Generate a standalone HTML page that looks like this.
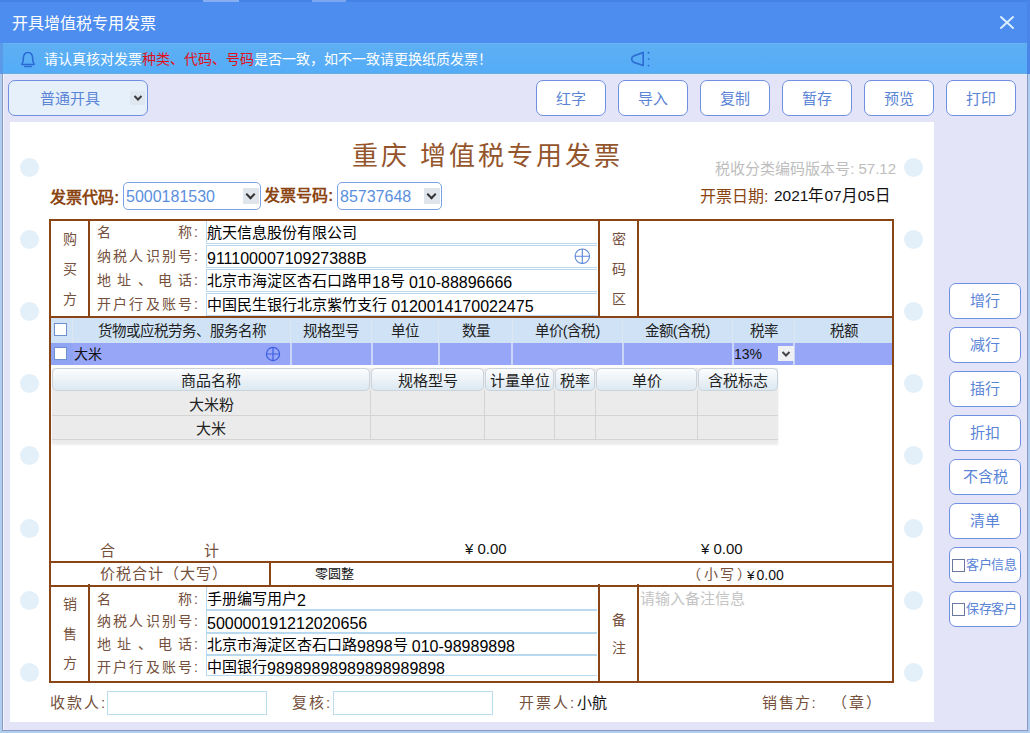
<!DOCTYPE html>
<html lang="zh-CN">
<head>
<meta charset="utf-8">
<style>
*{box-sizing:border-box;margin:0;padding:0}
html,body{width:1030px;height:733px;overflow:hidden;background:#b0cdee;font-family:"Liberation Sans",sans-serif}
.a{position:absolute}

#title{position:absolute;left:0;top:0;width:1030px;height:43px;background:#4e8df0}
#frm{position:absolute;left:2px;top:74px;width:1026px;height:657px;border:1px solid #8a9cc6;border-top:0;background:#e4e4f8}
#notice{position:absolute;left:3px;top:43px;width:1024px;height:31px;background:linear-gradient(#5eaff2,#54acf8);border-top:1px solid #66b4f6;border-bottom:1px solid #6aa8de}
.tb{position:absolute;top:80px;height:36px;width:70px;border:1px solid #6f8fe0;border-radius:7px;background:#fff;color:#5a84d6;font-size:15px;text-align:center;line-height:36px}
.rb{position:absolute;left:949px;width:72px;height:36px;border:1px solid #6f8fe0;border-radius:7px;background:#fff;color:#5a84d6;font-size:15px;text-align:center;line-height:34px}
#paper{position:absolute;left:10px;top:122px;width:924px;height:600px;background:#fff}
.dot{position:absolute;width:19px;height:19px;border-radius:50%;background:#e3f0fa}
.br{background:#8a4516}

.inp{position:absolute;border:1px solid #b8d9f0;border-right:0;background:#fff;font-size:15px;color:#000;line-height:21px;padding-left:0;white-space:nowrap;overflow:hidden}

.sel{border:1px solid #7ba2e6;border-radius:5px;background:#fff}
.sel span{position:absolute;left:2px;top:4px;font-size:16px;line-height:20px;color:#5a8fe0}
.sel i{position:absolute;top:5px;width:16px;height:16px;background:#e0e4eb}
.sel i:after{content:"";position:absolute;left:4px;top:3px;width:5px;height:5px;border-right:2px solid #333;border-bottom:2px solid #333;transform:rotate(45deg)}
.vt{font-size:14px;line-height:30px;color:#75503c;text-align:center}
.flab{position:absolute;left:97px;width:95px;display:flex;justify-content:space-between;font-size:14px;line-height:22px;color:#75503c}
.colon{position:absolute;left:194px;font-size:14px;line-height:22px;color:#75503c}
.cb{width:13px;height:13px;border:1px solid #6f8fcf;background:#fff}
.hdr{position:absolute;top:318px;height:25px;font-size:14.5px;line-height:26px;text-align:center;color:#222}
.gh{position:absolute;top:368px;height:23px;font-size:15px;line-height:23px;text-align:center;color:#222;border:1px solid #c9d3dc;border-radius:5px;background:linear-gradient(#fcfdfe,#dce8f1)}
.gt{font-size:15px;line-height:22px;text-align:center;color:#222}
.brl{font-size:15px;line-height:20px;color:#75503c;white-space:nowrap;letter-spacing:2px}
.sq{display:inline-block;width:13px;height:13px;border:1px solid #6a78a0;vertical-align:-3px;margin-right:1px}
.d{font-size:16px;vertical-align:-1.5px}
</style>
</head>
<body>
<div id="title"></div>
<div class="a" style="left:0;top:0;width:1030px;height:2px;background:#4683e6"></div><div class="a" style="left:1027px;top:0;width:3px;height:74px;background:#4a86e8"></div><div class="a" style="left:0;top:43px;width:3px;height:31px;background:#5a9ae8"></div>
<div class="a" style="left:12px;top:13px;color:#fff;font-size:16px;line-height:22px">开具增值税专用发票</div>
<svg class="a" style="left:998px;top:14px" width="18" height="17" viewBox="0 0 18 17"><path d="M3 3L15 14M15 3L3 14" stroke="#dcefff" stroke-width="1.9" stroke-linecap="round"/></svg>
<div id="notice"></div><div class="a" style="left:203px;top:0;width:36px;height:2px;background:#86aef0"></div><div class="a" style="left:312px;top:0;width:34px;height:2px;background:#7ca6ee"></div>
<div class="a" style="left:44px;top:49px;color:#fff;font-size:14px;line-height:20px;white-space:nowrap">请认真核对发票<span style="color:#e0101a">种类、代码、号码</span>是否一致，如不一致请更换纸质发票！</div>
<svg class="a" style="left:15px;top:45px" width="30" height="27" viewBox="0 0 30 27"><path d="M8.3 14C8.3 9.5 10.3 7.4 13 7.4S17.7 9.5 17.7 14C17.7 16.5 18.2 18 19.1 19Q19.5 19.6 18.7 19.6H7.3Q6.5 19.6 6.9 19C7.8 18 8.3 16.5 8.3 14Z" fill="none" stroke="#2a6ad2" stroke-width="1.5" stroke-linejoin="round"/><path d="M9.2 21.5H17" stroke="#2a6ad2" stroke-width="1.4"/></svg>
<svg class="a" style="left:629px;top:50px" width="24" height="18" viewBox="0 0 24 18"><path d="M14.2 2.4L4.6 6Q2.7 6.7 2.7 9.1Q2.7 11.5 4.6 12.2L14.2 15.5Z" fill="none" stroke="#2a6ad2" stroke-width="1.6" stroke-linejoin="round"/><circle cx="19.5" cy="2.7" r="0.95" fill="#2a6ad2"/><circle cx="19.7" cy="9.1" r="0.95" fill="#2a6ad2"/><circle cx="19.5" cy="15.6" r="0.95" fill="#2a6ad2"/></svg>
<div id="frm"></div><div class="a" style="left:3px;top:74px;width:1024px;height:1px;background:#d8eefb"></div><div class="a" style="left:3px;top:74px;width:1px;height:656px;background:#f2f2fc"></div>

<div class="tb" style="left:8px;width:140px;background:#e6f0fb;text-align:left;padding-left:31px">普通开具</div><div class="a" style="left:130px;top:91px;width:15px;height:14px;background:#dfe7f1"></div><svg class="a" style="left:133px;top:94px" width="10" height="8" viewBox="0 0 10 8"><path d="M1.5 2L5 5.5L8.5 2" fill="none" stroke="#3c3c3c" stroke-width="2"/></svg>
<div class="tb" style="left:536px">红字</div>
<div class="tb" style="left:618px">导入</div>
<div class="tb" style="left:700px">复制</div>
<div class="tb" style="left:782px">暂存</div>
<div class="tb" style="left:864px">预览</div>
<div class="tb" style="left:946px">打印</div>

<div id="paper"></div>

<!-- dots -->
<div class="dot" style="left:20px;top:158px"></div><div class="dot" style="left:904px;top:158px"></div><div class="dot" style="left:20px;top:230px"></div><div class="dot" style="left:904px;top:230px"></div><div class="dot" style="left:20px;top:302px"></div><div class="dot" style="left:904px;top:302px"></div><div class="dot" style="left:20px;top:374px"></div><div class="dot" style="left:904px;top:374px"></div><div class="dot" style="left:20px;top:446px"></div><div class="dot" style="left:904px;top:446px"></div><div class="dot" style="left:20px;top:519px"></div><div class="dot" style="left:904px;top:519px"></div><div class="dot" style="left:20px;top:591px"></div><div class="dot" style="left:904px;top:591px"></div><div class="dot" style="left:20px;top:663px"></div><div class="dot" style="left:904px;top:663px"></div>
<!-- invoice title -->
<div class="a" style="left:352px;top:138px;font-size:26px;line-height:36px;color:#94552c;letter-spacing:3px;white-space:nowrap">重庆 增值税专用发票</div>
<div class="a" style="left:714px;top:159px;width:182px;text-align:right;font-size:15px;line-height:20px;color:#bdbdbd;white-space:nowrap">税收分类编码版本号: 57.12</div>
<div class="a" style="left:700px;top:186px;font-size:16px;line-height:22px;white-space:nowrap;color:#8b4513">开票日期:</div><div class="a" style="left:774px;top:186px;font-size:15.5px;line-height:20px;white-space:nowrap;color:#111">2021年07月05日</div>

<div class="a" style="left:50px;top:187px;font-size:16px;line-height:22px;font-weight:bold;color:#8b4513;white-space:nowrap">发票代码:</div>
<div class="a sel" style="left:123px;top:182px;width:138px;height:28px"><span>5000181530</span><i style="left:119px"></i></div>
<div class="a" style="left:264px;top:185px;font-size:16px;line-height:22px;font-weight:bold;color:#8b4513;white-space:nowrap">发票号码:</div>
<div class="a sel" style="left:337px;top:182px;width:105px;height:28px"><span>85737648</span><i style="left:86px"></i></div>

<!-- table borders -->
<div class="a br" style="left:49px;top:219px;width:845px;height:2px"></div>
<div class="a br" style="left:49px;top:316px;width:845px;height:2px"></div>
<div class="a br" style="left:49px;top:561px;width:845px;height:2px"></div>
<div class="a br" style="left:49px;top:585px;width:845px;height:2px"></div>
<div class="a br" style="left:49px;top:681px;width:845px;height:2px"></div>
<div class="a br" style="left:49px;top:219px;width:2px;height:464px"></div>
<div class="a br" style="left:892px;top:219px;width:2px;height:464px"></div>
<div class="a br" style="left:88px;top:219px;width:2px;height:98px"></div>
<div class="a br" style="left:598px;top:219px;width:2px;height:98px"></div>
<div class="a br" style="left:637px;top:219px;width:2px;height:98px"></div>
<div class="a br" style="left:88px;top:584px;width:2px;height:98px"></div>
<div class="a br" style="left:598px;top:584px;width:2px;height:98px"></div>
<div class="a br" style="left:637px;top:584px;width:2px;height:98px"></div>
<div class="a br" style="left:269px;top:561px;width:2px;height:24px"></div>

<!-- buyer -->
<div class="a vt" style="left:51px;top:224px;width:37px">购<br>买<br>方</div>
<div class="a vt" style="left:600px;top:224px;width:37px">密<br>码<br>区</div>
<div class="a flab" style="top:221px"><span>名</span><span>称</span></div>
<div class="a flab" style="top:245px"><span>纳</span><span>税</span><span>人</span><span>识</span><span>别</span><span>号</span></div>
<div class="a flab" style="top:269px"><span>地</span><span>址</span><span>、</span><span>电</span><span>话</span></div>
<div class="a flab" style="top:293px"><span>开</span><span>户</span><span>行</span><span>及</span><span>账</span><span>号</span></div>
<div class="a colon" style="top:221px">:</div><div class="a colon" style="top:245px">:</div><div class="a colon" style="top:269px">:</div><div class="a colon" style="top:293px">:</div>
<div class="inp" style="left:206px;top:221px;width:391px;height:23px;border-top:0;padding-top:1px">航天信息股份有限公司</div>
<div class="inp" style="left:206px;top:245px;width:391px;height:23px"><span class="d">91110000710927388B</span></div>
<div class="inp" style="left:206px;top:269px;width:391px;height:23px">北京市海淀区杏石口路甲<span class="d">18</span>号 <span class="d">010-88896666</span></div>
<div class="inp" style="left:206px;top:293px;width:391px;height:23px">中国民生银行北京紫竹支行 <span class="d">0120014170022475</span></div>
<svg class="a" style="left:574px;top:248px" width="17" height="17" viewBox="0 0 17 17"><circle cx="8.3" cy="8.2" r="7.2" fill="none" stroke="#5a85d8" stroke-width="1.1"/><path d="M1.1 8.2H15.5M8.3 1V15.4" stroke="#5a85d8" stroke-width="1.1"/></svg>

<!-- items header -->
<div class="a" style="left:51px;top:318px;width:841px;height:25px;background:#cfe2f6"></div>
<div class="a" style="left:51px;top:343px;width:841px;height:22px;background:#98a6f8"></div>
<div class="a" style="left:51px;top:343px;width:22px;height:22px;background:#8fa5f4"></div>
<div class="a" style="left:72px;top:318px;width:1px;height:25px;background:#dce7f1"></div><div class="a" style="left:290px;top:318px;width:1px;height:25px;background:#dce7f1"></div><div class="a" style="left:371px;top:318px;width:1px;height:25px;background:#dce7f1"></div><div class="a" style="left:438px;top:318px;width:1px;height:25px;background:#dce7f1"></div><div class="a" style="left:512px;top:318px;width:1px;height:25px;background:#dce7f1"></div><div class="a" style="left:622px;top:318px;width:1px;height:25px;background:#dce7f1"></div><div class="a" style="left:732px;top:318px;width:1px;height:25px;background:#dce7f1"></div><div class="a" style="left:794px;top:318px;width:1px;height:25px;background:#dce7f1"></div><div class="a" style="left:290px;top:343px;width:2px;height:22px;background:#c9d6f7"></div><div class="a" style="left:371px;top:343px;width:2px;height:22px;background:#c9d6f7"></div><div class="a" style="left:438px;top:343px;width:2px;height:22px;background:#c9d6f7"></div><div class="a" style="left:511px;top:343px;width:2px;height:22px;background:#c9d6f7"></div><div class="a" style="left:622px;top:343px;width:2px;height:22px;background:#c9d6f7"></div><div class="a" style="left:732px;top:343px;width:2px;height:22px;background:#c9d6f7"></div><div class="a" style="left:793px;top:343px;width:2px;height:22px;background:#c9d6f7"></div>
<div class="a cb" style="left:54px;top:323px"></div>
<div class="a cb" style="left:54px;top:347px"></div>
<div class="hdr" style="left:73px;width:218px">货物或应税劳务、服务名称</div>
<div class="hdr" style="left:291px;width:80px">规格型号</div>
<div class="hdr" style="left:372px;width:66px">单位</div>
<div class="hdr" style="left:439px;width:73px">数量</div>
<div class="hdr" style="left:513px;width:109px">单价(含税)</div>
<div class="hdr" style="left:623px;width:109px">金额(含税)</div>
<div class="hdr" style="left:733px;width:61px">税率</div>
<div class="hdr" style="left:795px;width:97px">税额</div>
<div class="a" style="left:74px;top:343px;font-size:14px;line-height:22px;color:#111">大米</div>
<svg class="a" style="left:265px;top:346px" width="16" height="16" viewBox="0 0 16 16"><circle cx="8" cy="8" r="6.6" fill="none" stroke="#3a5fe0" stroke-width="1.2"/><path d="M1.4 8H14.6M8 1.4V14.6" stroke="#3a5fe0" stroke-width="1.2"/></svg>
<div class="a" style="left:734px;top:343px;font-size:14px;line-height:22px;color:#111">13%</div>
<div class="a" style="left:778px;top:346px;width:16px;height:15px;background:#eef0f4"></div>
<svg class="a" style="left:781px;top:350px" width="10" height="8" viewBox="0 0 10 8"><path d="M1.5 2L5 5.5L8.5 2" fill="none" stroke="#444" stroke-width="2"/></svg>

<!-- dropdown grid -->
<div class="a" style="left:52px;top:368px;width:726px;height:75px;background:#ebebeb;box-shadow:0 2px 2px rgba(0,0,0,0.08)"></div>
<div class="gh" style="left:52px;width:318px">商品名称</div>
<div class="gh" style="left:371px;width:113px">规格型号</div>
<div class="gh" style="left:485px;width:69px">计量单位</div>
<div class="gh" style="left:555px;width:40px">税率</div>
<div class="gh" style="left:596px;width:101px">单价</div>
<div class="gh" style="left:698px;width:80px">含税标志</div>
<div class="a" style="left:52px;top:415px;width:726px;height:1px;background:#d4d4d4"></div>
<div class="a" style="left:52px;top:439px;width:726px;height:1px;background:#d4d4d4"></div>
<div class="a" style="left:370px;top:390px;width:1px;height:50px;background:#d4d4d4"></div>
<div class="a" style="left:484px;top:390px;width:1px;height:50px;background:#d4d4d4"></div>
<div class="a" style="left:554px;top:390px;width:1px;height:50px;background:#d4d4d4"></div>
<div class="a" style="left:595px;top:390px;width:1px;height:50px;background:#d4d4d4"></div>
<div class="a" style="left:697px;top:390px;width:1px;height:50px;background:#d4d4d4"></div>
<div class="a gt" style="left:52px;top:394px;width:318px">大米粉</div>
<div class="a gt" style="left:52px;top:418px;width:318px">大米</div>

<!-- totals -->
<div class="a brl" style="left:100px;top:541px">合</div>
<div class="a brl" style="left:204px;top:541px">计</div>
<div class="a" style="left:465px;top:539px;font-size:15px;line-height:20px;color:#111">¥ 0.00</div>
<div class="a" style="left:701px;top:539px;font-size:15px;line-height:20px;color:#111">¥ 0.00</div>
<div class="a brl" style="left:100px;top:564px;letter-spacing:1px">价税合计（大写）</div>
<div class="a" style="left:315px;top:564px;font-size:13px;line-height:20px;color:#111">零圆整</div>
<div class="a brl" style="left:687px;top:564px;letter-spacing:2.5px;font-size:14px">（小写）</div><div class="a" style="left:747px;top:565px;font-size:13.5px;line-height:20px;color:#111;white-space:nowrap">¥<span style="margin-left:2px;font-size:14px">0.00</span></div>

<!-- seller -->
<div class="a vt" style="left:51px;top:590px;width:37px;line-height:29.5px">销<br>售<br>方</div>
<div class="a vt" style="left:600px;top:606px;width:37px;line-height:28px">备<br>注</div>
<div class="a flab" style="top:588px"><span>名</span><span>称</span></div>
<div class="a flab" style="top:610px"><span>纳</span><span>税</span><span>人</span><span>识</span><span>别</span><span>号</span></div>
<div class="a flab" style="top:633px"><span>地</span><span>址</span><span>、</span><span>电</span><span>话</span></div>
<div class="a flab" style="top:656px"><span>开</span><span>户</span><span>行</span><span>及</span><span>账</span><span>号</span></div>
<div class="a colon" style="top:588px">:</div><div class="a colon" style="top:610px">:</div><div class="a colon" style="top:633px">:</div><div class="a colon" style="top:656px">:</div>
<div class="inp" style="left:206px;top:587px;width:391px;height:23px;border-top:0;padding-top:1px">手册编写用户<span class="d">2</span></div>
<div class="inp" style="left:206px;top:610px;width:391px;height:23px"><span class="d">500000191212020656</span></div>
<div class="inp" style="left:206px;top:633px;width:391px;height:22px">北京市海淀区杏石口路<span class="d">9898</span>号 <span class="d">010-98989898</span></div>
<div class="inp" style="left:206px;top:655px;width:391px;height:21px">中国银行<span class="d">98989898989898989898</span></div>
<div class="a" style="left:640px;top:589px;font-size:15px;line-height:20px;color:#c4c4c4">请输入备注信息</div>

<!-- signatures -->
<div class="a brl" style="left:50px;top:693px">收款人:</div>
<div class="a" style="left:107px;top:691px;width:160px;height:24px;border:1px solid #bcdcf0"></div>
<div class="a brl" style="left:292px;top:693px">复核:</div>
<div class="a" style="left:333px;top:691px;width:160px;height:24px;border:1px solid #bcdcf0"></div>
<div class="a brl" style="left:519px;top:693px">开票人:</div>
<div class="a" style="left:577px;top:693px;font-size:15px;line-height:20px;color:#111">小航</div>
<div class="a brl" style="left:762px;top:693px;letter-spacing:1.5px">销售方:</div>
<div class="a brl" style="left:832px;top:693px;letter-spacing:2px">（章）</div>

<div class="rb" style="top:283px">增行</div>
<div class="rb" style="top:327px">减行</div>
<div class="rb" style="top:371px">插行</div>
<div class="rb" style="top:415px">折扣</div>
<div class="rb" style="top:459px">不含税</div>
<div class="rb" style="top:503px">清单</div>
<div class="rb" style="top:547px;font-size:13px;text-align:left;padding-left:2px;white-space:nowrap;letter-spacing:-0.3px"><span class="sq"></span>客户信息</div>
<div class="rb" style="top:591px;font-size:13px;text-align:left;padding-left:2px;white-space:nowrap;letter-spacing:-0.3px"><span class="sq"></span>保存客户</div>

</body>
</html>
